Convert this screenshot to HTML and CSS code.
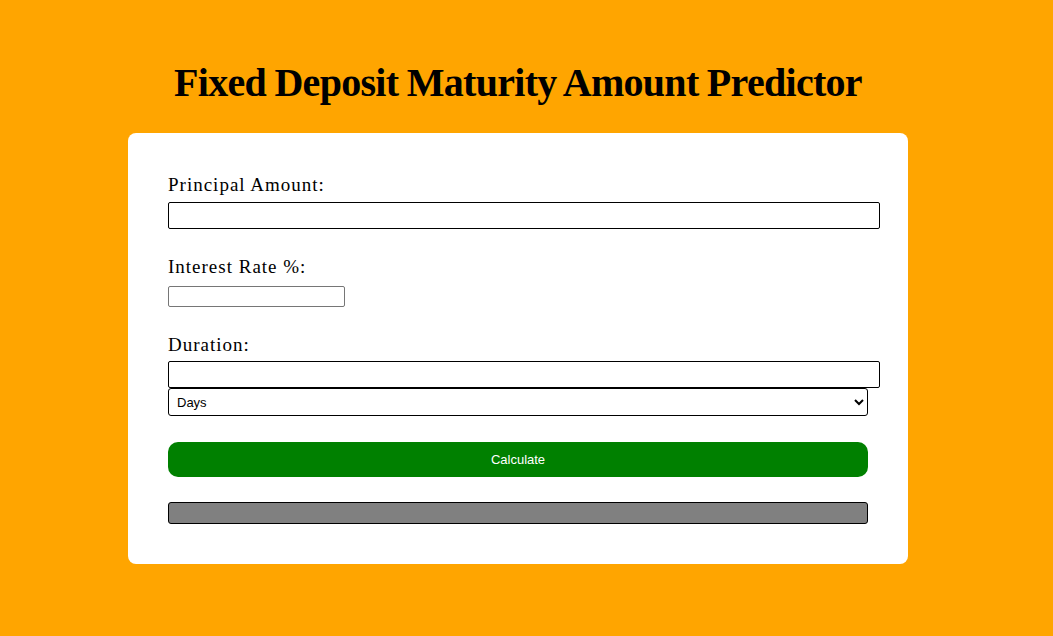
FILE: index.html
```html
<!DOCTYPE html>
<html lang="en">
<head>
<meta charset="utf-8">
<title>Fixed Deposit Maturity Amount Predictor</title>
<link rel="stylesheet" href="styles.css">
</head>
<body>
<div class="page">
  <h1 class="title">Fixed Deposit Maturity Amount Predictor</h1>
  <form class="card">
    <label class="label" for="principal">Principal Amount:</label>
    <input class="input-wide" id="principal" type="text">
    <label class="label label-gap label-loose" for="rate">Interest Rate %:</label>
    <input class="input-small" id="rate" type="text">
    <label class="label label-gap label-tight" for="duration">Duration:</label>
    <input class="input-wide" id="duration" type="text">
    <select class="select" id="unit">
      <option>Days</option>
      <option>Months</option>
      <option>Years</option>
    </select>
    <button class="btn" type="button">Calculate</button>
    <div class="result"></div>
  </form>
</div>
</body>
</html>
```

FILE: styles.css
```css
html, body {
  margin: 0;
  padding: 0;
  background: #ffa500;
}
.page {
  width: 1036px;
  display: flex;
  flex-direction: column;
  align-items: center;
}
.title {
  margin: 61px 0 28px;
  font-family: "Liberation Serif", serif;
  font-weight: bold;
  font-size: 40px;
  line-height: 44px;
  color: #000;
  letter-spacing: -0.7px;
  word-spacing: -1px;
}
.card {
  box-sizing: border-box;
  width: 780px;
  background: #fff;
  border-radius: 8px;
  padding: 40px 40px 40px;
  display: flex;
  flex-direction: column;
  align-items: flex-start;
}
.label {
  display: block;
  font-family: "Liberation Serif", serif;
  font-size: 19px;
  line-height: 21px;
  letter-spacing: 1px;
  color: #000;
  margin-top: 1px;
  margin-bottom: 7px;
}
.label-gap { margin-top: 27px; }
.label-loose { margin-bottom: 9px; }
.label-tight { margin-bottom: 6px; }
.input-wide {
  box-sizing: border-box;
  width: 712px;
  height: 27px;
  margin: 0;
  padding: 5px;
  border: 1px solid #000;
  border-radius: 2px;
  background: #fff;
}
.input-small {
  box-sizing: border-box;
  width: 177px;
  height: 21px;
  margin: 0;
  padding: 1px 2px;
  border: 1px solid #767676;
  border-radius: 2px;
  background: #fff;
}
.select {
  box-sizing: border-box;
  width: 700px;
  height: 28px;
  margin: 0;
  padding: 0 4px;
  border: 1px solid #000;
  border-radius: 3px;
  background: #fff;
  font-family: "Liberation Sans", Arial, sans-serif;
  font-size: 13px;
  color: #000;
}
.btn {
  box-sizing: border-box;
  width: 700px;
  height: 35px;
  margin: 26px 0 0;
  border: none;
  border-radius: 10px;
  background: #008000;
  color: #fff;
  font-family: "Liberation Sans", Arial, sans-serif;
  font-size: 13px;
}
.result {
  box-sizing: border-box;
  width: 700px;
  height: 22px;
  margin-top: 25px;
  background: #808080;
  border: 1px solid #000;
  border-radius: 3px;
}
```
